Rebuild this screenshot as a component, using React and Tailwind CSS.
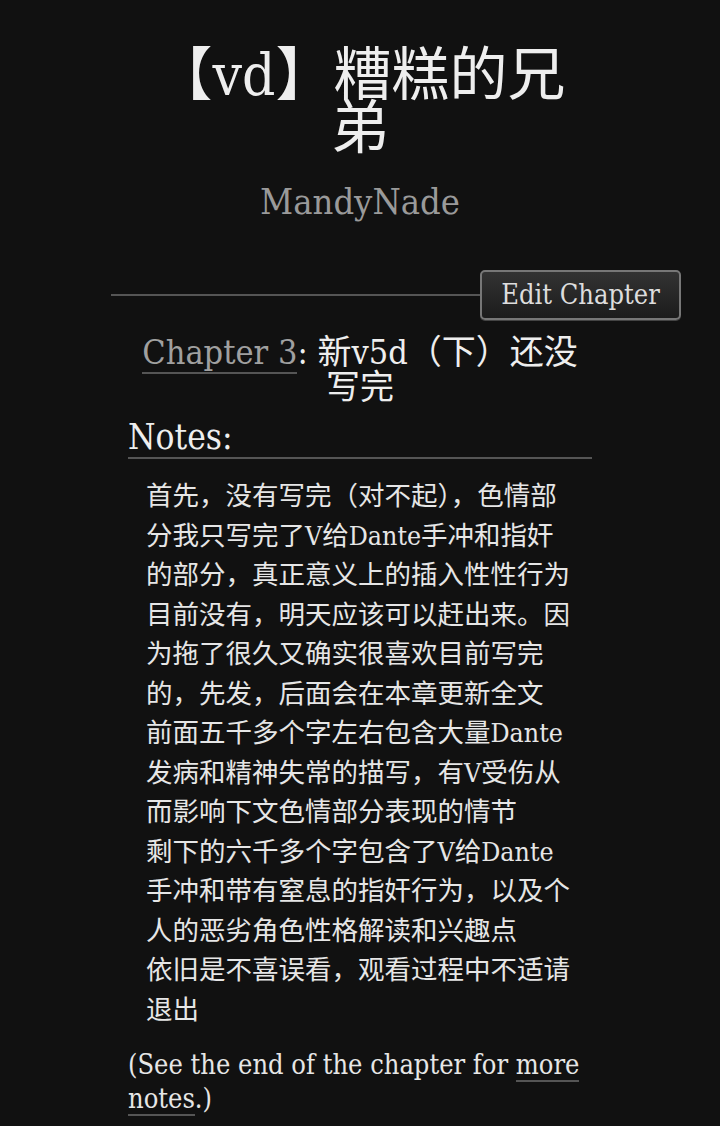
import React from "react";

const serif = { fontFamily: '"DejaVu Serif Condensed", "DejaVu Serif", "Noto Sans CJK SC", serif' };

const notes = [
  "首先，没有写完（对不起），色情部",
  "分我只写完了V给Dante手冲和指奸",
  "的部分，真正意义上的插入性性行为",
  "目前没有，明天应该可以赶出来。因",
  "为拖了很久又确实很喜欢目前写完",
  "的，先发，后面会在本章更新全文",
  "前面五千多个字左右包含大量Dante",
  "发病和精神失常的描写，有V受伤从",
  "而影响下文色情部分表现的情节",
  "剩下的六千多个字包含了V给Dante",
  "手冲和带有窒息的指奸行为，以及个",
  "人的恶劣角色性格解读和兴趣点",
  "依旧是不喜误看，观看过程中不适请",
  "退出",
];

export default function App() {
  return (
    <div className="w-[720px] h-[1126px] overflow-hidden bg-[#111111] text-[#e6e6e6]" style={serif}>
      <div className="pt-[49px]">
        <h2 className="mx-auto w-[430px] text-center text-[58px] leading-[53px] text-[#eeeeee]">
          【vd】糟糕的兄弟
        </h2>
        <div className="mt-[27px] text-center text-[36px] leading-[40px] text-[#9a9a9a]">MandyNade</div>
      </div>

      <div className="mt-[48px] ml-[111px] w-[570px] flex items-center">
        <div className="flex-1 h-[2px] bg-[#555555]"></div>
        <div className="h-[50px] w-[201px] rounded-[5px] border-2 border-[#777777] bg-gradient-to-b from-[#333333] to-[#1c1c1c] flex items-center justify-center text-[27px] text-[#dddddd] shadow-[0_1px_0_#444]">
          Edit Chapter
        </div>
      </div>

      <div className="ml-[128px] w-[464px]">
        <h3 className="mx-auto w-[450px] mt-[15px] text-center text-[34px] leading-[35px] text-[#eeeeee]">
          <span className="text-[#a0a0a0] border-b-2 border-[#555555]">Chapter 3</span>: 新v5d（下）还没写完
        </h3>

        <div className="mt-[13px] border-b-2 border-[#555555] text-[35px] leading-[38px] text-[#eeeeee] pb-[1px]">
          Notes:
        </div>

        <div className="ml-[18px] mt-[17px] text-[26.5px] leading-[39.5px] text-[#e6e6e6]">
          {notes.map((l, i) => (
            <div key={i} className="whitespace-nowrap">{l}</div>
          ))}
        </div>

        <p className="mt-[19px] text-[27px] leading-[34px] text-[#e6e6e6]">
          (See the end of the chapter for <span className="border-b-2 border-[#555555]">more notes</span>.)
        </p>
      </div>
    </div>
  );
}
